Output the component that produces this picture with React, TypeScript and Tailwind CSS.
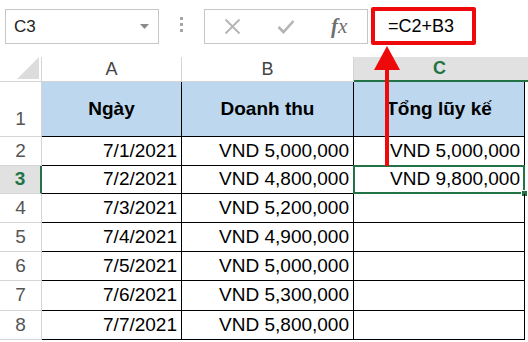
import React from 'react'

const font = { fontFamily: '"Liberation Sans", Arial, sans-serif' }

const data = [
  { n: 2, date: '7/1/2021', rev: 'VND 5,000,000', total: 'VND 5,000,000', h: 'h-[29px]' },
  { n: 3, date: '7/2/2021', rev: 'VND 4,800,000', total: 'VND 9,800,000', h: 'h-[28px]' },
  { n: 4, date: '7/3/2021', rev: 'VND 5,200,000', total: '', h: 'h-[29px]' },
  { n: 5, date: '7/4/2021', rev: 'VND 4,900,000', total: '', h: 'h-[29px]' },
  { n: 6, date: '7/5/2021', rev: 'VND 5,000,000', total: '', h: 'h-[29px]' },
  { n: 7, date: '7/6/2021', rev: 'VND 5,300,000', total: '', h: 'h-[30px]' },
  { n: 8, date: '7/7/2021', rev: 'VND 5,800,000', total: '', h: 'h-[29px]' },
]

function FormulaBar() {
  return (
    <div className="flex h-[57px] items-start pt-[9px]">
      <div className="ml-[5px] flex h-[35px] w-[154px] items-center justify-between border border-[#c6c6c6] pl-[8px] pr-[9px]">
        <span className="text-[17px] text-[#222]">C3</span>
        <svg width="9" height="5" viewBox="0 0 9 5">
          <path d="M0 0 L9 0 L4.5 5 Z" fill="#8a8a8a" />
        </svg>
      </div>
      <div className="flex w-[45px] flex-col items-center gap-[3px] pt-[8px]">
        <div className="h-[3px] w-[3px] bg-[#a6a6a6]" />
        <div className="h-[3px] w-[3px] bg-[#a6a6a6]" />
        <div className="h-[3px] w-[3px] bg-[#a6a6a6]" />
      </div>
      <div className="flex h-[35px] w-[164px] items-center border border-[#c6c6c6]">
        <svg className="ml-[19px]" width="17" height="17" viewBox="0 0 17 17">
          <path d="M1.5 1.5 L15.5 15.5 M15.5 1.5 L1.5 15.5" stroke="#b4b4b4" strokeWidth="1.8" />
        </svg>
        <svg className="ml-[36px]" width="18" height="15" viewBox="0 0 18 15">
          <path d="M1.5 8 L6.5 13 L16.5 2" fill="none" stroke="#b4b4b4" strokeWidth="2.6" />
        </svg>
        <span
          className="ml-[36px] text-[21px] italic text-[#6f6f6f]"
          style={{ fontFamily: '"Liberation Serif", "Times New Roman", serif' }}
        >
          <span className="font-semibold">f</span>x
        </span>
      </div>
      <div className="ml-[3px] mt-[-2px] flex h-[38px] w-[105px] items-center rounded-[2px] border-[4px] border-[#ee0a0a] pl-[13px]">
        <span className="text-[18px] text-black">=C2+B3</span>
      </div>
    </div>
  )
}

function ColumnHeaders() {
  return (
    <div className="flex h-[25px] text-[18px] text-[#444]">
      <div className="flex w-[42px] items-end justify-end border-b border-r border-[#d4d4d4] pb-[2px] pr-[2px]">
        <svg width="22" height="22" viewBox="0 0 22 22">
          <path d="M22 0 L22 22 L0 22 Z" fill="#dcdcdc" />
        </svg>
      </div>
      <div className="flex w-[140px] items-center justify-center border-b border-r border-[#d4d4d4]">A</div>
      <div className="flex w-[172px] items-center justify-center border-b border-r border-[#d4d4d4]">B</div>
      <div className="flex flex-1 items-center justify-center border-b-2 border-[#217346] bg-[#e1e1e1] font-bold text-[#217346]">
        <span className="pr-[3px]">C</span>
      </div>
    </div>
  )
}

export default function App() {
  return (
    <div className="relative h-[342px] w-[528px] overflow-hidden bg-white" style={font}>
      <FormulaBar />
      <ColumnHeaders />

      <div className="flex h-[55px]">
        <div className="flex w-[42px] items-end justify-center border-b border-r border-[#d4d4d4] pb-[3px] text-[19px] text-[#555]">1</div>
        <div className="flex w-[140px] items-center justify-center border-b border-r border-black bg-[#bdd7ee] text-[19px] font-bold text-black">Ngày</div>
        <div className="flex w-[172px] items-center justify-center border-b border-r border-black bg-[#bdd7ee] text-[19px] font-bold text-black">Doanh thu</div>
        <div className="flex w-[171px] items-center justify-center border-b border-r border-black bg-[#bdd7ee] text-[19px] font-bold text-black">Tổng lũy kế</div>
      </div>

      {data.map((r) => {
        const sel = r.n === 3
        return (
          <div key={r.n} className={`flex ${r.h} text-[19px] text-black`}>
            <div
              className={
                sel
                  ? 'flex w-[42px] items-center justify-center border-b border-r-2 border-b-[#d4d4d4] border-r-[#217346] bg-[#e1e1e1] font-bold text-[#217346]'
                  : 'flex w-[42px] items-center justify-center border-b border-r border-[#d4d4d4] text-[#555]'
              }
            >
              {r.n}
            </div>
            <div className="flex w-[140px] items-center justify-end border-b border-r border-black pr-[4px]">{r.date}</div>
            <div className="flex w-[172px] items-center justify-end border-b border-r border-black pr-[4px]">{r.rev}</div>
            <div className="relative flex w-[171px] items-center justify-end border-b border-r border-black pr-[4px]">
              {r.total}
              {sel && (
                <>
                  <div className="absolute -left-px -top-px bottom-[-1px] right-[-1px] border-2 border-[#217346]" />
                  <div className="absolute bottom-[-3px] right-[-3px] h-[5px] w-[5px] bg-[#217346] outline outline-1 outline-white" />
                </>
              )}
            </div>
          </div>
        )
      })}

      <svg className="pointer-events-none absolute left-0 top-0" width="528" height="342" viewBox="0 0 528 342">
        <path d="M387 166 L387 68" stroke="#ee0a0a" strokeWidth="4" />
        <path d="M374 70 L400 70 L387 46 Z" fill="#ee0a0a" />
      </svg>
    </div>
  )
}
